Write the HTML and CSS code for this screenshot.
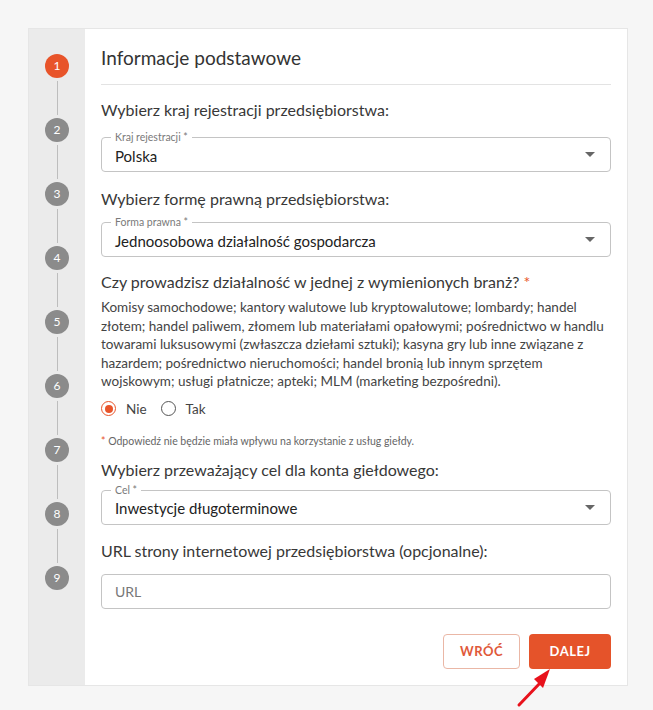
FILE: index.html
```html
<!DOCTYPE html>
<html lang="pl">
<head>
<meta charset="utf-8">
<title>Informacje podstawowe</title>
<link rel="stylesheet" href="styles.css">
</head>
<body>
<div class="page">
    <div class="card">
        <div class="stepper">
            <div class="step active">1</div>
            <div class="step-line"></div>
            <div class="step">2</div>
            <div class="step-line"></div>
            <div class="step">3</div>
            <div class="step-line"></div>
            <div class="step">4</div>
            <div class="step-line"></div>
            <div class="step">5</div>
            <div class="step-line"></div>
            <div class="step">6</div>
            <div class="step-line"></div>
            <div class="step">7</div>
            <div class="step-line"></div>
            <div class="step">8</div>
            <div class="step-line"></div>
            <div class="step">9</div>
        </div>
        <div class="content">
            <h1 class="title">Informacje podstawowe</h1>

            <p class="question q-country">Wybierz kraj rejestracji przedsiębiorstwa:</p>
            <div class="select">
                <span class="float-label">Kraj rejestracji *</span>
                <span class="value">Polska</span>
                <span class="caret"></span>
            </div>

            <p class="question">Wybierz formę prawną przedsiębiorstwa:</p>
            <div class="select">
                <span class="float-label">Forma prawna *</span>
                <span class="value">Jednoosobowa działalność gospodarcza</span>
                <span class="caret"></span>
            </div>

            <p class="question q-branch">Czy prowadzisz działalność w jednej z wymienionych branż? <span class="req">*</span></p>
            <p class="branches">Komisy samochodowe; kantory walutowe lub kryptowalutowe; lombardy; handel złotem; handel paliwem, złomem lub materiałami opałowymi; pośrednictwo w handlu towarami luksusowymi (zwłaszcza dziełami sztuki); kasyna gry lub inne związane z hazardem; pośrednictwo nieruchomości; handel bronią lub innym sprzętem wojskowym; usługi płatnicze; apteki; MLM (marketing bezpośredni).</p>
            <div class="radios">
                <label class="radio checked"><span class="dot"></span>Nie</label>
                <label class="radio"><span class="dot"></span>Tak</label>
            </div>
            <p class="note"><span class="req">*</span> Odpowiedź nie będzie miała wpływu na korzystanie z usług giełdy.</p>

            <p class="question q-goal">Wybierz przeważający cel dla konta giełdowego:</p>
            <div class="select">
                <span class="float-label">Cel *</span>
                <span class="value">Inwestycje długoterminowe</span>
                <span class="caret"></span>
            </div>

            <p class="question q-url">URL strony internetowej przedsiębiorstwa (opcjonalne):</p>
            <div class="select">
                <span class="placeholder">URL</span>
            </div>

            <div class="actions">
                <button class="btn btn-back">WRÓĆ</button>
                <button class="btn btn-next">DALEJ</button>
            </div>
        </div>
    </div>
</div>
<svg class="pointer" width="50" height="50" viewBox="0 0 50 50">
    <line x1="7" y1="43" x2="29" y2="20" stroke="#e8121c" stroke-width="3" stroke-linecap="round"/>
    <polygon points="38,7 22,17 31,26" fill="#e8121c"/>
</svg>
</body>
</html>
```

FILE: styles.css
```css
body {
    margin: 0;
    padding: 0;
    background: #f6f6f6;
    font-family: Lato, "Noto Sans", sans-serif;
    color: #333;
}

.page {
    padding: 28px 0 0 28px;
}

.card {
    width: 598px;
    height: 656px;
    display: flex;
    background: #fff;
    border: 1px solid #e6e6e6;
}

/* left stepper */
.stepper {
    width: 56px;
    background: #ebebeb;
    display: flex;
    flex-direction: column;
    align-items: center;
    padding-top: 25px;
    flex-shrink: 0;
}

.step {
    width: 24px;
    height: 24px;
    border-radius: 50%;
    background: #8b8b8b;
    color: #fff;
    font-size: 12px;
    line-height: 24px;
    text-align: center;
}

.step.active {
    background: #e8542a;
}

.step-line {
    width: 1px;
    height: 34px;
    margin: 3px 0;
    background: #bdbdbd;
}

/* form */
.content {
    flex: 1;
    padding: 15px 16px 0 16px;
}

.title {
    margin: 0;
    font-size: 19px;
    font-weight: 400;
    line-height: 28px;
    padding-bottom: 12px;
    border-bottom: 1px solid #e3e3e3;
    color: #333;
}

.question {
    margin: 16px 0 12px;
    font-size: 16px;
    line-height: 22px;
    color: #383838;
}

.q-country {
    margin: 14px 0 16px;
}

.q-branch {
    margin-top: 14px;
}

.q-goal {
    margin: 11px 0 9px;
}

.q-url {
    margin: 15px 0 12px;
}

.req {
    color: #e8542a;
}

.select {
    position: relative;
    height: 33px;
    border: 1px solid #c4c4c4;
    border-radius: 4px;
    display: flex;
    align-items: center;
    padding: 0 13px;
}

.float-label {
    position: absolute;
    top: -8px;
    left: 9px;
    padding: 0 4px;
    background: #fff;
    font-size: 10.5px;
    line-height: 14px;
    color: #7a7a7a;
}

.value {
    flex: 1;
    font-size: 15px;
    color: #222;
    padding-top: 2px;
}

.caret {
    width: 0;
    height: 0;
    border-left: 5px solid transparent;
    border-right: 5px solid transparent;
    border-top: 5px solid #666;
    margin-right: 2px;
}

.branches {
    margin: -7px 0 0;
    font-size: 13.5px;
    line-height: 18.5px;
    color: #444;
}

.radios {
    display: flex;
    gap: 14px;
    margin: 7px 0 0;
    height: 22px;
    align-items: center;
}

.radio {
    display: flex;
    align-items: center;
    gap: 10px;
    font-size: 13.5px;
    color: #444;
}

.dot {
    width: 13px;
    height: 13px;
    border: 1.6px solid #555;
    border-radius: 50%;
    box-sizing: content-box;
    display: flex;
    align-items: center;
    justify-content: center;
}

.radio.checked .dot {
    border-color: #e8542a;
}

.radio.checked .dot::after {
    content: "";
    width: 8px;
    height: 8px;
    border-radius: 50%;
    background: #e8542a;
}

.note {
    margin: 14px 0 0;
    font-size: 10.5px;
    line-height: 14px;
    color: #666;
}

.placeholder {
    font-size: 14px;
    color: #777;
}

.actions {
    display: flex;
    justify-content: flex-end;
    gap: 9px;
    margin-top: 25px;
}

.btn {
    height: 35px;
    border-radius: 4px;
    font-family: inherit;
    font-size: 13px;
    font-weight: 700;
    letter-spacing: 0.5px;
    cursor: pointer;
}

.btn-back {
    width: 77px;
    background: #fff;
    border: 1px solid #eab7a6;
    color: #e0593a;
}

.btn-next {
    width: 82px;
    background: #e5532a;
    border: none;
    color: #fff;
}

.pointer {
    position: absolute;
    left: 512px;
    top: 662px;
}
```
